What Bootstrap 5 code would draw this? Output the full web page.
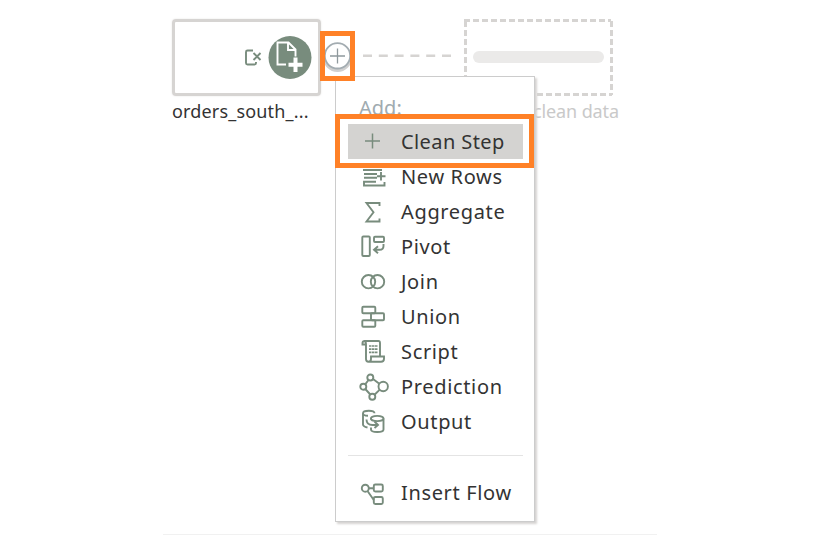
<!DOCTYPE html>
<html lang="en">
<head>
<meta charset="utf-8">
<title>Flow</title>
<link href="https://cdn.jsdelivr.net/npm/bootstrap@5.3.0/dist/css/bootstrap.min.css" rel="stylesheet">
<style>
body{font-family:"Noto Sans","Open Sans",sans-serif;color:#333;background:#fff}
.flow-canvas{width:817px;height:536px}
.node-src{left:172px;top:19px;width:149px;height:77px;border:3px solid #d6d4d2;border-radius:4px;box-shadow:0 0 2px #e4e2e0}
.node-out{left:463px;top:18px}
.node-label{font-size:18px;line-height:24px;white-space:nowrap}
.lbl-src{left:172px;top:99px;letter-spacing:.17px}
.lbl-out{right:198px;top:99px;color:#c9c9c9;letter-spacing:-.1px}
.link-line{left:355px;top:40px}
.add-btn{left:320px;top:39px}
.callout{border:5px solid #ff8127}
.callout-add{left:320px;top:31px;width:35px;height:50px}
.callout-step{left:335px;top:114px;width:199px;height:54px;padding:5px 6px 5px 8px}
.flow-menu{left:335px;top:76px;width:200px;height:446px;border:1px solid #ccc;padding:14px 11px 0 12px;box-shadow:2px 2px 2px #d6d4d2}
.menu-head{height:34px;padding-left:11px;font-size:20px;line-height:33px;color:#a0abb0}
.step{height:35px;padding-left:11px;font-size:20px;letter-spacing:.65px}
.step span{line-height:33px;height:35px}
.step svg{width:30px;height:30px;margin-right:12px;flex:none}
.step.active-step{background:#d4d3d1;letter-spacing:.4px}
.active-step span{line-height:36px}
.rule-line{height:1px;background:#e4e4e4;margin:15px 0 20px}
.ico{fill:none;stroke:#788c7d;stroke-width:1.9}
.foot-line{left:163px;top:534px;width:494px;height:1px;background:#f1f1f1}
</style>
<script src="https://cdn.jsdelivr.net/npm/bootstrap@5.3.0/dist/js/bootstrap.bundle.min.js"></script>
</head>
<body>
<main class="flow-canvas position-relative overflow-hidden">
  <div class="node-src position-absolute d-flex">
    <svg width="143" height="71" viewBox="175 22 143 71" fill="none">
      <path d="M253 50.500h-5.500q-1.500 0-1.500 1.500v11q0 1.500 1.500 1.500h7q1.500 0 1.500-1.500V62" stroke="#788c7d" stroke-width="1.900"/>
      <path d="M253.500 53l7 7M260.500 53l-7 7" stroke="#788c7d" stroke-width="1.900"/>
      <circle cx="290" cy="57.500" r="21.500" fill="#788c7d"/>
      <path d="M286 64.500h-8.500v-22h11l7 7v7M288 42.500v7.500h7.500" stroke="#fff" stroke-width="1.900"/>
      <path d="M295.500 57.500v14.500M288.500 64.700h14" stroke="#fff" stroke-width="4"/>
    </svg>
  </div>
  <div class="node-label lbl-src position-absolute">orders_south_...</div>
  <svg class="link-line position-absolute" width="105" height="30"><path d="M8 15.800H97" stroke="#d6d4d2" stroke-width="2.600" stroke-dasharray="9 6.800"/></svg>
  <svg class="node-out position-absolute" width="152" height="80">
    <path d="M1 2.500H148M148.500 3V77M2.500 3V77M2 76.500H149" fill="none" stroke="#d6d4d2" stroke-width="3" stroke-dasharray="6 3"/>
    <rect x="10" y="33" width="131" height="12" rx="6" fill="#ebeae9"/>
  </svg>
  <div class="node-label lbl-out position-absolute">clean data</div>
  <svg class="add-btn position-absolute" width="35" height="36" fill="none">
    <circle cx="17.500" cy="18.500" r="13" stroke="#d0d0d0" stroke-width="3"/>
    <circle cx="17.500" cy="16.800" r="12.700" fill="#fff" stroke="#a3acb1" stroke-width="1.800"/>
    <path d="M17.500 9.500v15M10 17h15" stroke="#8f999d" stroke-width="1.300"/>
  </svg>

  <nav class="flow-menu position-absolute bg-white d-flex flex-column">
    <div class="menu-head">Add:</div>
    <div class="step d-flex align-items-center"></div>
    <div class="step d-flex align-items-center"><svg class="ico" viewBox="0 0 30 30"><path d="M4 7h19M5 11h13M5 14.800h13M17 18.700H5V22.500h20.500V19M22 9v8.500M18 13.300h8.500"/></svg><span>New Rows</span></div>
    <div class="step d-flex align-items-center"><svg class="ico" viewBox="0 0 30 30"><path d="M20.500 8V5H7.500l7 9.200L7.500 23.500h13V20.500"/></svg><span>Aggregate</span></div>
    <div class="step d-flex align-items-center"><svg class="ico" viewBox="0 0 30 30"><rect x="3.300" y="3.500" width="7.500" height="19.500" rx="1"/><rect x="15" y="3.800" width="10" height="5.200" rx="1"/><path d="M24.500 11v2q0 3.800-4 3.800H15.500M19 13.300l-4 3.500 4 3.500"/></svg><span>Pivot</span></div>
    <div class="step d-flex align-items-center"><svg class="ico" viewBox="0 0 30 30"><circle cx="9.500" cy="13.700" r="6.700"/><circle cx="18.500" cy="13.700" r="6.700"/></svg><span>Join</span></div>
    <div class="step d-flex align-items-center"><svg class="ico" viewBox="0 0 30 30"><rect x="3.300" y="3.800" width="13" height="6.500" rx="1"/><rect x="12" y="10.300" width="13" height="7" rx="1"/><rect x="3.300" y="17.300" width="13" height="6.500" rx="1"/></svg><span>Union</span></div>
    <div class="step d-flex align-items-center"><svg class="ico" viewBox="0 0 30 30"><path d="M7 6.500H3.500V5q0-2 2.500-2h13.500q1.500 0 1.500 2V18M5.500 3Q7 3.500 7 6.500V21q0 2.700 2.500 2.700h12.500q3 0 3-3V18.500H12V21q0 2.700-2.500 2.700"/><path d="M10 8h8.500M10 11.200h8.500M10 14.400h8.500" stroke-width="1.700" stroke-dasharray="2.500 .5"/></svg><span>Script</span></div>
    <div class="step d-flex align-items-center"><svg class="ico" viewBox="0 0 30 30"><circle cx="11.300" cy="4.500" r="3"/><circle cx="4.300" cy="13.700" r="3"/><circle cx="24.200" cy="13.500" r="4.700"/><circle cx="13.300" cy="23.800" r="3"/><path d="M9.500 7L6.200 11.300M14 6l6 4.500M6.300 16l5 5.500M15.500 21.700l5-4.800"/></svg><span>Prediction</span></div>
    <div class="step d-flex align-items-center"><svg class="ico" viewBox="0 0 30 30"><path d="M8.500 19.500Q4 18.500 4 16.500V5.300q0-2.500 5.800-2.500T15.500 5.300M4 5.300q0 2.500 5 2.500M12 11.500V10M12 19.500v2q0 2.500 6.300 2.500t6.200-2.500V10.500"/><ellipse cx="18.200" cy="10.500" rx="6.300" ry="2.600"/><path d="M7.500 11.500q0 5.500 6 5.500h5M15.500 13.500l3.500 3.500-3.500 3"/></svg><span>Output</span></div>
    <div class="rule-line"></div>
    <div class="step d-flex align-items-center"><svg class="ico" viewBox="0 0 30 30"><circle cx="6.300" cy="9.200" r="3.500"/><rect x="14.800" y="5.500" width="9" height="7" rx="1.500"/><rect x="14.800" y="18" width="9" height="7" rx="1.500"/><path d="M9.800 9.200h5M8.500 12l6.300 9"/></svg><span>Insert Flow</span></div>
  </nav>

  <div class="callout callout-step position-absolute bg-white">
    <div class="step active-step d-flex align-items-center"><svg class="ico" viewBox="0 0 30 30"><path d="M13.500 6.500v15M6 14h15" stroke-width="1.500"/></svg><span>Clean Step</span></div>
  </div>
  <div class="callout callout-add position-absolute"></div>
  <div class="foot-line position-absolute"></div>
</main>
</body>
</html>
